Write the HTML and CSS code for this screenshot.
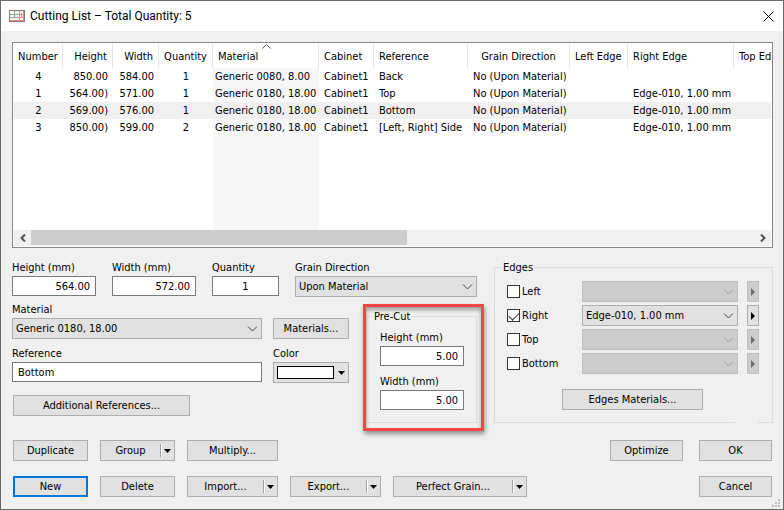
FILE: index.html
```html
<!DOCTYPE html>
<html lang="en">
<head>
    <meta charset="UTF-8">
    <meta name="viewport" content="width=device-width, initial-scale=1.0">
    <title>Cutting List</title>
    <link rel="stylesheet" href="styles.css">
</head>
<body>
    <div class="window">
        <header class="titlebar">
            <svg class="app-icon" width="16" height="12" viewBox="0 0 16 12">
                <rect x="0.5" y="0.5" width="15" height="11" fill="#f4f4f4" stroke="#8d7774"/>
                <path d="M1 4.5H10M1 7.5H8M5.5 1V8M10.5 1V4" stroke="#94a59b" fill="none"/>
                <path d="M14.5 1V11M1 10.5H15M8 7.5H14M10.5 5V10M12.5 3V7M10 4.5H14" stroke="#e08d8d" fill="none"/>
            </svg>
            <h1>Cutting List – Total Quantity: 5</h1>
            <button class="close" type="button" aria-label="Close">
                <svg width="11" height="11" viewBox="0 0 11 11"><path d="M0.5 0.5L10.5 10.5M10.5 0.5L0.5 10.5" stroke="#000" fill="none"/></svg>
            </button>
        </header>

        <main class="content">
            <div class="list">
                <div class="list-view">
                    <table class="parts">
                        <colgroup>
                            <col class="w-number"><col class="w-height"><col class="w-width"><col class="w-quantity"><col class="w-material">
                            <col class="w-cabinet"><col class="w-reference"><col class="w-grain"><col class="w-left"><col class="w-right"><col>
                        </colgroup>
                        <thead>
                            <tr>
                                <th class="center">Number</th>
                                <th class="right">Height</th>
                                <th class="right">Width</th>
                                <th class="center">Quantity</th>
                                <th class="sorted">Material
                                    <svg class="sort" width="9" height="5" viewBox="0 0 9 5"><path d="M0.5 4.5L4.5 0.5L8.5 4.5" stroke="#555" fill="none"/></svg>
                                </th>
                                <th>Cabinet</th>
                                <th>Reference</th>
                                <th class="center">Grain Direction</th>
                                <th>Left Edge</th>
                                <th>Right Edge</th>
                                <th>Top Edge</th>
                            </tr>
                        </thead>
                        <tbody>
                            <tr>
                                <td class="center">4</td><td class="right">850.00</td><td class="right">584.00</td><td class="center">1</td>
                                <td class="material">Generic 0080, 8.00</td><td>Cabinet1</td><td>Back</td><td>No (Upon Material)</td>
                                <td></td><td></td><td></td>
                            </tr>
                            <tr>
                                <td class="center">1</td><td class="right">564.00)</td><td class="right">571.00</td><td class="center">1</td>
                                <td class="material">Generic 0180, 18.00</td><td>Cabinet1</td><td>Top</td><td>No (Upon Material)</td>
                                <td></td><td>Edge-010, 1.00 mm</td><td></td>
                            </tr>
                            <tr class="selected">
                                <td class="center">2</td><td class="right">569.00)</td><td class="right">576.00</td><td class="center">1</td>
                                <td class="material">Generic 0180, 18.00</td><td>Cabinet1</td><td>Bottom</td><td>No (Upon Material)</td>
                                <td></td><td>Edge-010, 1.00 mm</td><td></td>
                            </tr>
                            <tr>
                                <td class="center">3</td><td class="right">850.00)</td><td class="right">599.00</td><td class="center">2</td>
                                <td class="material">Generic 0180, 18.00</td><td>Cabinet1</td><td>[Left, Right] Side</td><td>No (Upon Material)</td>
                                <td></td><td>Edge-010, 1.00 mm</td><td></td>
                            </tr>
                            <tr class="filler" aria-hidden="true">
                                <td colspan="4"></td><td class="material"></td><td colspan="6"></td>
                            </tr>
                        </tbody>
                    </table>
                </div>
                <div class="scrollbar">
                    <button class="scroll-btn" type="button" aria-label="Scroll left">
                        <svg width="6" height="8" viewBox="0 0 6 8"><path d="M5 0.5L1.5 4L5 7.5" stroke="#505050" stroke-width="2" fill="none"/></svg>
                    </button>
                    <div class="track"><div class="thumb"></div></div>
                    <button class="scroll-btn" type="button" aria-label="Scroll right">
                        <svg width="6" height="8" viewBox="0 0 6 8"><path d="M1 0.5L4.5 4L1 7.5" stroke="#505050" stroke-width="2" fill="none"/></svg>
                    </button>
                </div>
            </div>

            <form class="details">
                <div class="part">
                    <div class="sizes">
                        <div class="field size"><label for="height">Height (mm)</label><input class="text number" id="height" type="text" value="564.00"></div>
                        <div class="field size"><label for="width">Width (mm)</label><input class="text number" id="width" type="text" value="572.00"></div>
                        <div class="field quantity"><label for="quantity">Quantity</label><input class="text center" id="quantity" type="text" value="1"></div>
                        <div class="field grow">
                            <label for="grain">Grain Direction</label>
                            <div class="combo">
                                <select id="grain"><option>Upon Material</option></select>
                                <svg class="chevron" width="11" height="6" viewBox="0 0 11 6"><path d="M1 0.5L5.5 5L10 0.5"/></svg>
                            </div>
                        </div>
                    </div>

                    <div class="part-body">
                        <div class="material-grid">
                            <div class="field">
                                <label for="material">Material</label>
                                <div class="combo">
                                    <select id="material"><option>Generic 0180, 18.00</option></select>
                                    <svg class="chevron" width="11" height="6" viewBox="0 0 11 6"><path d="M1 0.5L5.5 5L10 0.5"/></svg>
                                </div>
                            </div>
                            <button class="btn bottom" type="button">Materials...</button>
                            <div class="field"><label for="reference">Reference</label><input class="text" id="reference" type="text" value="Bottom"></div>
                            <div class="field">
                                <label for="color">Color</label>
                                <button class="btn color" id="color" type="button">
                                    <span class="swatch"></span>
                                    <svg width="7" height="4" viewBox="0 0 7 4"><path d="M0 0H7L3.5 4Z"/></svg>
                                </button>
                            </div>
                            <button class="btn more" type="button">Additional References...</button>
                        </div>

                        <div class="highlight">
                            <fieldset class="group precut">
                                <legend>Pre-Cut</legend>
                                <div class="field"><label for="cut-height">Height (mm)</label><input class="text number" id="cut-height" type="text" value="5.00"></div>
                                <div class="field"><label for="cut-width">Width (mm)</label><input class="text number" id="cut-width" type="text" value="5.00"></div>
                            </fieldset>
                        </div>
                    </div>
                </div>

                <fieldset class="group edges">
                    <legend>Edges</legend>
                    <div class="edge">
                        <label class="check"><input type="checkbox">Left</label>
                        <div class="combo">
                            <select aria-label="Left edge" disabled></select>
                            <svg class="chevron" width="11" height="6" viewBox="0 0 11 6"><path d="M1 0.5L5.5 5L10 0.5"/></svg>
                        </div>
                        <button class="btn arrow" type="button" aria-label="Left edge options" disabled><svg width="4" height="8" viewBox="0 0 4 8"><path d="M0 0L4 4L0 8Z"/></svg></button>
                    </div>
                    <div class="edge">
                        <label class="check"><input type="checkbox" checked>Right</label>
                        <div class="combo">
                            <select aria-label="Right edge"><option>Edge-010, 1.00 mm</option></select>
                            <svg class="chevron" width="11" height="6" viewBox="0 0 11 6"><path d="M1 0.5L5.5 5L10 0.5"/></svg>
                        </div>
                        <button class="btn arrow" type="button" aria-label="Right edge options"><svg width="4" height="8" viewBox="0 0 4 8"><path d="M0 0L4 4L0 8Z"/></svg></button>
                    </div>
                    <div class="edge">
                        <label class="check"><input type="checkbox">Top</label>
                        <div class="combo">
                            <select aria-label="Top edge" disabled></select>
                            <svg class="chevron" width="11" height="6" viewBox="0 0 11 6"><path d="M1 0.5L5.5 5L10 0.5"/></svg>
                        </div>
                        <button class="btn arrow" type="button" aria-label="Top edge options" disabled><svg width="4" height="8" viewBox="0 0 4 8"><path d="M0 0L4 4L0 8Z"/></svg></button>
                    </div>
                    <div class="edge">
                        <label class="check"><input type="checkbox">Bottom</label>
                        <div class="combo">
                            <select aria-label="Bottom edge" disabled></select>
                            <svg class="chevron" width="11" height="6" viewBox="0 0 11 6"><path d="M1 0.5L5.5 5L10 0.5"/></svg>
                        </div>
                        <button class="btn arrow" type="button" aria-label="Bottom edge options" disabled><svg width="4" height="8" viewBox="0 0 4 8"><path d="M0 0L4 4L0 8Z"/></svg></button>
                    </div>
                    <button class="btn edge-materials" type="button">Edges Materials...</button>
                </fieldset>
            </form>

            <div class="actions">
                <div class="action-row">
                    <button class="btn small" type="button">Duplicate</button>
                    <button class="btn small split" type="button"><span class="split-label">Group</span><span class="drop"><svg width="7" height="4" viewBox="0 0 7 4"><path d="M0 0H7L3.5 4Z"/></svg></span></button>
                    <button class="btn medium" type="button">Multiply...</button>
                    <div class="dialog-buttons">
                        <button class="btn dialog" type="button">Optimize</button>
                        <button class="btn dialog" type="button">OK</button>
                    </div>
                </div>
                <div class="action-row">
                    <button class="btn small default" type="button">New</button>
                    <button class="btn small" type="button">Delete</button>
                    <button class="btn medium split" type="button"><span class="split-label">Import...</span><span class="drop"><svg width="7" height="4" viewBox="0 0 7 4"><path d="M0 0H7L3.5 4Z"/></svg></span></button>
                    <button class="btn medium split" type="button"><span class="split-label">Export...</span><span class="drop"><svg width="7" height="4" viewBox="0 0 7 4"><path d="M0 0H7L3.5 4Z"/></svg></span></button>
                    <button class="btn large split" type="button"><span class="split-label">Perfect Grain...</span><span class="drop"><svg width="7" height="4" viewBox="0 0 7 4"><path d="M0 0H7L3.5 4Z"/></svg></span></button>
                    <div class="dialog-buttons">
                        <button class="btn dialog" type="button">Cancel</button>
                    </div>
                </div>
            </div>
        </main>
        <svg class="grip" width="8" height="8" viewBox="0 0 8 8"><path d="M6 0h2v2h-2zM3 3h2v2h-2zM6 3h2v2h-2zM0 6h2v2h-2zM3 6h2v2h-2zM6 6h2v2h-2z" fill="#bfbfbf"/></svg>
    </div>
</body>
</html>
```

FILE: styles.css
```css
* {
    box-sizing: border-box;
}
body {
    margin: 0;
    background: #f0f0f0;
}
body,
button,
input,
select {
    font-family: Tahoma, "DejaVu Sans Condensed", "Noto Sans", sans-serif;
    font-size: 11px;
    line-height: 16px;
    color: #000;
}
button,
input,
select {
    margin: 0;
}
.window {
    position: relative;
    min-width: 784px;
    border: 1px solid #6b696b;
    background: #f0f0f0;
}

/* Title bar */
.titlebar {
    display: flex;
    align-items: center;
    height: 30px;
    padding: 0 9px 0 8px;
    background: #fff;
}
.titlebar h1 {
    flex: 1;
    margin: 0 0 0 5px;
    font-family: "Segoe UI", Roboto, sans-serif;
    font-size: 12px;
    font-weight: 400;
}
.close {
    display: flex;
    padding: 0;
    border: none;
    background: none;
}
.content {
    padding: 11px 10px 12px 11px;
}

/* Parts list */
.list {
    padding: 1px;
    border: 1px solid #828790;
    background: #fff;
}
.list-view {
    overflow: hidden;
}
.parts {
    width: 100%;
    min-width: 780px;
    table-layout: fixed;
    border-collapse: separate;
    border-spacing: 0;
}
.w-number { width: 49px; }
.w-height { width: 50px; }
.w-width { width: 46px; }
.w-quantity { width: 54px; }
.w-material { width: 106px; }
.w-cabinet { width: 55px; }
.w-reference { width: 94px; }
.w-grain { width: 102px; }
.w-left { width: 58px; }
.w-right { width: 106px; }
.parts th,
.parts td {
    padding: 1px 0 0 5px;
    text-align: left;
    font-weight: 400;
    white-space: nowrap;
}
.parts th {
    height: 24px;
    border-right: 1px solid #e5e5e5;
}
.parts td {
    height: 17px;
}
.parts .center {
    padding-left: 0;
    text-align: center;
}
.parts .right {
    padding: 1px 5px 0 0;
    text-align: right;
}
.parts td.material {
    padding-left: 2px;
    background: #f7f7f7;
}
.parts .selected td {
    background: #f0f0f0;
}
.parts .filler td {
    height: 94px;
}
.sorted {
    position: relative;
}
.sort {
    position: absolute;
    top: 0;
    left: 49px;
}
.scrollbar {
    display: flex;
    height: 16px;
    background: #f0f0f0;
}
.scroll-btn {
    display: flex;
    align-items: center;
    justify-content: center;
    width: 17px;
    padding: 0;
    border: none;
    background: none;
}
.track {
    flex: 1;
}
.thumb {
    width: 52%;
    height: 15px;
    background: #cdcdcd;
}

/* Fields */
.details {
    display: flex;
    gap: 17px;
    margin-top: 11px;
}
.part {
    width: 465px;
}
.field label {
    display: block;
    height: 17px;
    line-height: 18px;
}
.text {
    display: block;
    width: 100%;
    height: 20px;
    padding: 0 5px;
    border: 1px solid #7a7a7a;
    border-radius: 0;
    background: #fff;
}
.number {
    text-align: right;
}
.text.center {
    text-align: center;
}
.combo {
    position: relative;
}
.combo select {
    display: block;
    width: 100%;
    height: 21px;
    padding: 0 20px 0 3px;
    appearance: none;
    border: 1px solid #adadad;
    border-radius: 0;
    background: #e1e1e1;
}
.chevron {
    position: absolute;
    top: 8px;
    right: 4px;
    fill: none;
    stroke: #444;
    pointer-events: none;
}
.combo select:disabled {
    border-color: #bfbfbf;
    background: #ccc;
    opacity: 1;
}
select:disabled + .chevron {
    stroke: #a0a0a0;
}
.sizes {
    display: flex;
    gap: 16px;
}
.size {
    width: 84px;
}
.quantity {
    width: 67px;
}
.grow {
    flex: 1;
}
.part-body {
    display: flex;
    gap: 17px;
    margin-top: 4px;
}
.material-grid {
    display: grid;
    grid-template-columns: 250px 76px;
    column-gap: 11px;
    row-gap: 6px;
    align-content: start;
}

/* Buttons */
.btn {
    height: 21px;
    padding: 0;
    border: 1px solid #adadad;
    border-radius: 0;
    background: #e1e1e1;
    text-align: center;
}
.btn:disabled {
    border-color: #bfbfbf;
    background: #ccc;
}
.bottom {
    align-self: end;
}
.color {
    display: flex;
    align-items: center;
    gap: 4px;
    width: 76px;
    padding-left: 3px;
}
.swatch {
    width: 57px;
    height: 13px;
    border: 1px solid #000;
    background: #fff;
}
.more {
    width: 177px;
    margin: 6px 0 0 1px;
}

/* Groups */
.group {
    min-width: 0;
    margin: 0;
    border: 1px solid #dcdcdc;
}
.group legend {
    height: 16px;
    padding: 0 2px;
    line-height: 18px;
}
.highlight {
    position: relative;
    flex: 1;
    margin-top: 7px;
}
.highlight::after {
    content: "";
    position: absolute;
    inset: -4px -7px -8px -3px;
    border: 3px solid #fb4245;
    box-shadow: 1px 3px 5px rgba(0, 0, 0, 0.4), inset 0 3px 4px rgba(0, 0, 0, 0.35);
    pointer-events: none;
}
.precut {
    display: grid;
    gap: 7px;
    padding: 5px 12px 12px 13px;
}
.precut legend {
    margin-left: -8px;
}
.edges {
    position: relative;
    flex: 1;
    padding: 6px 13px 11px 12px;
}
.edges legend {
    margin-left: -6px;
}
/* Breaks in the frame beside the option buttons */
.edges::before,
.edges::after {
    content: "";
    position: absolute;
    right: 14px;
    width: 23px;
    height: 3px;
    background: #f0f0f0;
}
.edges::before {
    top: -2px;
}
.edges::after {
    bottom: -2px;
}
.edge {
    display: grid;
    grid-template-columns: 75px 1fr 12px;
    align-items: center;
    margin-bottom: 3px;
}
.edge .combo {
    margin-right: 9px;
}
.check {
    display: flex;
    align-items: center;
    gap: 2px;
}
.check input {
    display: grid;
    width: 13px;
    height: 13px;
    appearance: none;
    border: 1px solid #333;
    background: #fff;
}
.check input:checked::before {
    content: "";
    width: 9px;
    height: 5px;
    margin: 2px 0 0 1px;
    border: solid #333;
    border-width: 0 0 1px 1px;
    transform: rotate(-45deg);
}
.arrow {
    display: flex;
    align-items: center;
    justify-content: center;
    width: 12px;
}
.arrow:disabled svg {
    fill: #6d6d6d;
}
.edge-materials {
    display: block;
    width: 141px;
    margin: 15px 0 0 55px;
}

/* Bottom buttons */
.actions {
    display: grid;
    gap: 15px;
    margin: 17px 1px 0 1px;
}
.action-row {
    display: flex;
    gap: 12px;
}
.small {
    width: 75px;
}
.medium {
    width: 91px;
}
.large {
    width: 134px;
}
.dialog {
    width: 73px;
}
.default {
    border: 2px solid #0078d7;
}
.dialog-buttons {
    display: flex;
    gap: 16px;
    margin-left: auto;
}
.split {
    display: flex;
    align-items: center;
}
.split-label {
    flex: 1;
}
.drop {
    display: flex;
    align-items: center;
    width: 14px;
    height: 13px;
    padding-left: 3px;
    border-left: 1px solid #a0a0a0;
    box-shadow: inset 1px 0 #fff;
}
.grip {
    position: absolute;
    right: 3px;
    bottom: 2px;
}
```
